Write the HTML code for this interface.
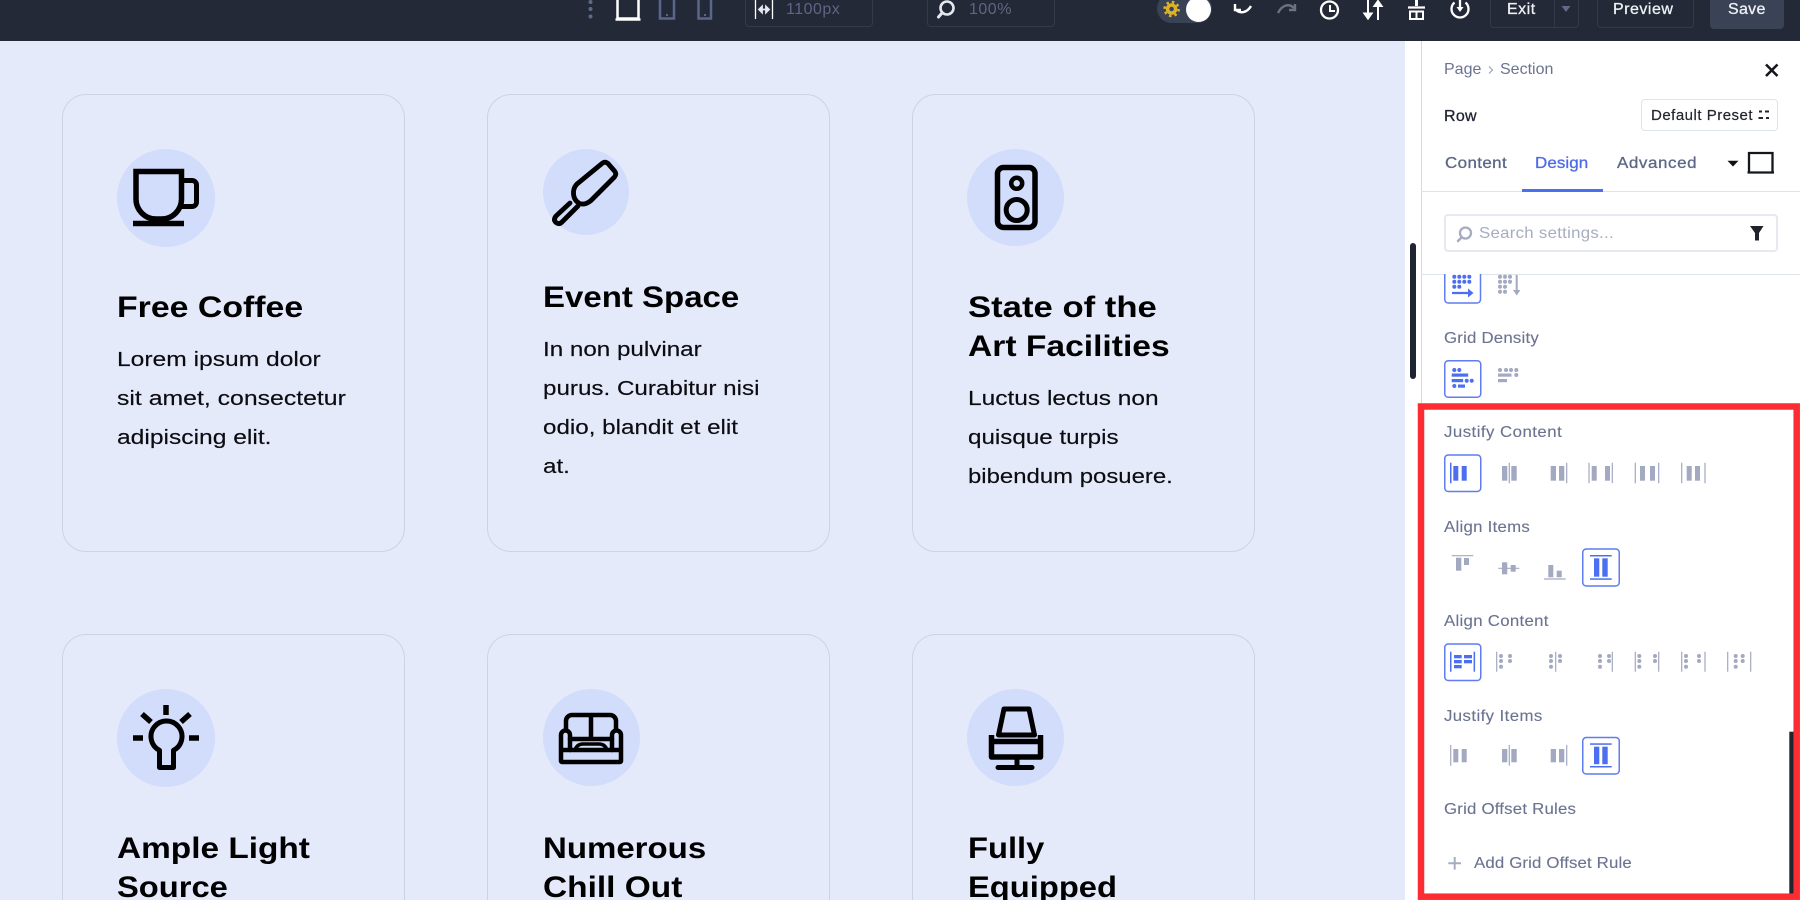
<!DOCTYPE html>
<html lang="en"><head><meta charset="utf-8"><title>Row Design Settings</title>
<style>
html,body{margin:0;padding:0;width:1800px;height:900px;overflow:hidden;background:#fff}
body{position:relative;font-family:"Liberation Sans",sans-serif}
.bg{position:absolute;left:0;top:41px;width:1405px;height:859px;background:#e5eafb}
.bar{position:absolute;left:0;top:0;width:1800px;height:41px;background:#232936}
.panel{position:absolute;left:1421px;top:41px;width:379px;height:859px;background:#fff;border-left:1px solid #d5d9e6;box-sizing:border-box}
.card{position:absolute;width:343px;box-sizing:border-box;border:1px solid #ccd3e4;border-radius:24px}
.r2{height:266px;border-bottom:0;border-radius:24px 24px 0 0}
.c{position:absolute;border-radius:50%;background:#d2dcfb}
.h{position:absolute;white-space:nowrap;font-size:30px;line-height:40px;font-weight:700;color:#000;transform:scaleX(1.1);transform-origin:0 0}
.b{position:absolute;white-space:nowrap;font-size:20.5px;line-height:39px;color:#0b0b10;-webkit-text-stroke:.15px #0b0b10;transform:scaleX(1.18);transform-origin:0 0}
.t{position:absolute;white-space:nowrap;font-size:16px;line-height:20px;color:#6b7390;transform:scaleX(1.05);transform-origin:0 0;-webkit-text-stroke:.12px #6b7390}
.p{position:absolute;white-space:nowrap;font-size:16px;line-height:20px;color:#6b7390}
.tab{position:absolute;white-space:nowrap;font-size:16px;line-height:20px;top:154px;transform:scaleX(1.06);transform-origin:0 0}
.box{position:absolute;box-sizing:border-box;border:1px solid #333a4a;border-radius:4px}
.w{color:#eef0f5;-webkit-text-stroke:.3px #eef0f5;letter-spacing:.5px}
svg.o{position:absolute;left:0;top:0;width:1800px;height:900px;pointer-events:none}
</style></head><body>
<div class="bg"></div>

<div class="card" style="left:62px;top:94px;height:458px"></div>
<div class="card" style="left:487px;top:94px;height:458px"></div>
<div class="card" style="left:912px;top:94px;height:458px"></div>
<div class="card r2" style="left:62px;top:634px"></div>
<div class="card r2" style="left:487px;top:634px"></div>
<div class="card r2" style="left:912px;top:634px"></div>

<div class="c" style="left:117px;top:149px;width:98px;height:98px"></div>
<div class="c" style="left:543px;top:149px;width:86px;height:86px"></div>
<div class="c" style="left:967px;top:149px;width:97px;height:97px"></div>
<div class="c" style="left:117px;top:689px;width:98px;height:98px"></div>
<div class="c" style="left:543px;top:689px;width:97px;height:97px"></div>
<div class="c" style="left:967px;top:689px;width:97px;height:97px"></div>

<div class="h" style="left:117px;top:288px;transform:scaleX(1.128)">Free Coffee</div>
<div class="b" style="left:117px;top:340px;transform:scaleX(1.2)">Lorem ipsum dolor</div>
<div class="b" style="left:117px;top:379px;transform:scaleX(1.21)">sit amet, consectetur</div>
<div class="b" style="left:117px;top:418px;transform:scaleX(1.2)">adipiscing elit.</div>

<div class="h" style="left:543px;top:277.5px">Event Space</div>
<div class="b" style="left:543px;top:330px">In non pulvinar</div>
<div class="b" style="left:543px;top:369px">purus. Curabitur nisi</div>
<div class="b" style="left:543px;top:408px">odio, blandit et elit</div>
<div class="b" style="left:543px;top:447px">at.</div>

<div class="h" style="left:968px;top:288px;transform:scaleX(1.156)">State of the</div>
<div class="h" style="left:968px;top:327px;transform:scaleX(1.12)">Art Facilities</div>
<div class="b" style="left:968px;top:379px;transform:scaleX(1.195)">Luctus lectus non</div>
<div class="b" style="left:968px;top:418px">quisque turpis</div>
<div class="b" style="left:968px;top:457px;transform:scaleX(1.167)">bibendum posuere.</div>

<div class="h" style="left:117px;top:829px;transform:scaleX(1.113)">Ample Light</div>
<div class="h" style="left:117px;top:868px;height:32px;overflow:hidden;transform:scaleX(1.09)">Source</div>
<div class="h" style="left:543px;top:829px">Numerous</div>
<div class="h" style="left:543px;top:868px;height:32px;overflow:hidden;transform:scaleX(1.115)">Chill Out</div>
<div class="h" style="left:968px;top:829px;transform:scaleX(1.09)">Fully</div>
<div class="h" style="left:968px;top:868px;height:32px;overflow:hidden;transform:scaleX(1.09)">Equipped</div>

<div class="panel"></div>
<div style="position:absolute;left:1410px;top:243px;width:5.5px;height:136px;border-radius:3px;background:#1e2430"></div>

<div class="bar"></div>
<div class="box" style="left:745px;top:-4px;width:128px;height:31px"></div>
<div class="box" style="left:927px;top:-4px;width:128px;height:31px"></div>
<div class="p" style="left:786px;top:0;color:#5d6785;letter-spacing:.5px">1100px</div>
<div class="p" style="left:969px;top:0;color:#5d6785;letter-spacing:.5px">100%</div>
<div style="position:absolute;left:1157px;top:-6px;width:55px;height:29px;border-radius:15px;background:#3a4356"></div>
<div style="position:absolute;left:1186px;top:-3px;width:25px;height:25px;border-radius:50%;background:#fff"></div>
<div class="box" style="left:1490px;top:-4px;width:89px;height:32px"></div>
<div class="box" style="left:1597px;top:-4px;width:97px;height:32px"></div>
<div style="position:absolute;left:1710px;top:-4px;width:74px;height:33px;border-radius:4px;background:#3a4355"></div>
<div style="position:absolute;left:1554px;top:0;width:1px;height:28px;background:#333a4a"></div>
<div class="p w" style="left:1507px;top:0">Exit</div>
<div class="p w" style="left:1613px;top:0">Preview</div>
<div class="p w" style="left:1728px;top:0;letter-spacing:.3px">Save</div>

<div class="p" style="left:1444px;top:60px">Page</div>
<div class="p" style="left:1500px;top:60px">Section</div>
<div class="p" style="left:1444px;top:107px;color:#1f2433;letter-spacing:.3px;-webkit-text-stroke:.3px #1f2433">Row</div>
<div style="position:absolute;left:1641px;top:99px;width:137px;height:32px;box-sizing:border-box;border:1px solid #dfe3ec;border-radius:4px"></div>
<div class="p" style="left:1651px;top:105.5px;color:#23262f;font-size:15px;letter-spacing:.5px;-webkit-text-stroke:.2px #23262f">Default Preset</div>
<div class="tab" style="left:1445px;color:#5d6785;letter-spacing:.36px;-webkit-text-stroke:.3px #5d6785">Content</div>
<div class="tab" style="left:1535px;color:#4f6ae8;letter-spacing:.08px;-webkit-text-stroke:.3px #4f6ae8">Design</div>
<div class="tab" style="left:1617px;color:#5d6785;letter-spacing:.56px;-webkit-text-stroke:.3px #5d6785">Advanced</div>
<div style="position:absolute;left:1421px;top:191px;width:379px;height:1px;background:#dfe3ea"></div>
<div style="position:absolute;left:1522px;top:188.5px;width:81px;height:3px;background:#4c6ef0"></div>
<div style="position:absolute;left:1444px;top:214px;width:334px;height:38px;box-sizing:border-box;border:2px solid #e6e9f0;border-radius:4px"></div>
<div class="t" style="left:1479px;top:223.5px;color:#a6adc0;letter-spacing:.27px;-webkit-text-stroke:0">Search settings...</div>
<div style="position:absolute;left:1421px;top:273.5px;width:379px;height:1px;background:#dfe3ea"></div>

<div class="t" style="left:1444px;top:329px;letter-spacing:.2px">Grid Density</div>
<div class="t" style="left:1444px;top:423px;letter-spacing:.45px">Justify Content</div>
<div class="t" style="left:1444px;top:518px;letter-spacing:.26px">Align Items</div>
<div class="t" style="left:1444px;top:612px;letter-spacing:.28px">Align Content</div>
<div class="t" style="left:1444px;top:706.5px;letter-spacing:.39px">Justify Items</div>
<div class="t" style="left:1444px;top:800px;letter-spacing:.2px">Grid Offset Rules</div>
<div class="t" style="left:1474px;top:854px;letter-spacing:.15px">Add Grid Offset Rule</div>

<svg class="o" viewBox="0 0 1800 900" xmlns="http://www.w3.org/2000/svg" fill="none">
<!-- card icons -->
<g stroke="#000" stroke-width="5.5" stroke-linejoin="round" stroke-linecap="round">
<path stroke-linejoin="miter" stroke-linecap="butt" d="M136 171.500H181.500V199a20 20 0 0 1-20 20H156a20 20 0 0 1-20-20Z"/>
<path stroke-width="5" stroke-linecap="butt" d="M182 180.500H192a4.500 4.500 0 0 1 4.500 4.500V202a4.500 4.500 0 0 1-4.500 4.500H178"/>
<path stroke-linecap="butt" d="M133 223.500H184"/>
<path stroke-width="4.800" d="M602 163.500Q605 161 608 163.500L614.500 171Q617 174 614.500 177L591 200.500Q585 205.500 579.500 203.500Q573 200 573.500 191.500Q574 187 577 184Z"/>
<path stroke-width="4.800" d="M570 203L556 216Q553 220 556 222.500Q559 225 562 222L578 206"/>
<rect x="997.500" y="167.500" width="37.500" height="60" rx="6" stroke-width="5.500"/>
<circle cx="1016.700" cy="183.300" r="5.500" stroke-width="4.500"/>
<circle cx="1016.700" cy="210" r="10.500" stroke-width="5"/>
<path stroke-width="5.500" stroke-linecap="butt" d="M166 705V715M142 714L151 722M190 714L181 722M133 738H143M189 738H199"/>
<path stroke-width="5" d="M159.500 750.300a15.500 15.500 0 1 1 14 0V767.500H159.500Z"/>
<path stroke-width="4.500" d="M566 730V721a6 6 0 0 1 6-6H610a6 6 0 0 1 6 6V730M591 715V739M570 739H612"/>
<path stroke-width="4.500" d="M561 750V735a4.500 4.500 0 0 1 9 0V750M612 750V735a4.500 4.500 0 0 1 9 0V750"/>
<path stroke-width="3.500" d="M575 750Q577 744 583 744H599Q605 744 607 750"/>
<rect x="561" y="750" width="60" height="12" rx="1" stroke-width="4.500"/>
<path stroke-width="5" d="M1004 709H1029L1034.500 735H998.500Z"/>
<path stroke-width="5.500" stroke-linecap="butt" d="M991.500 735V757H1040.500V735M991 741.500H1041"/>
<path stroke-width="5" d="M1017 757V767.500M998 767.500H1032"/>
</g>
<!-- top bar -->
<g fill="#5f6a8a"><circle cx="590.500" cy="2" r="2"/><circle cx="590.500" cy="9" r="2"/><circle cx="590.500" cy="16.500" r="2"/></g>
<path d="M617.500 -2V18.500H638.500V-2M615.500 19.500H640.500" stroke="#fff" stroke-width="2.500"/>
<path d="M660 -2V18.500H674V-2M698.500 -2V18.500H711V-2" stroke="#5a668c" stroke-width="2.500"/>
<rect x="666" y="14" width="2" height="2" fill="#5a668c"/><rect x="704" y="14" width="2" height="2" fill="#5a668c"/>
<path d="M755.500 0V19M772.500 0V19" stroke="#fff" stroke-width="1.300"/>
<path d="M759 9.500H769M759 9.500l3-3v6zM769 9.500l-3-3v6z" stroke="#e6e8ef" stroke-width="1.800" fill="#e6e8ef"/>
<circle cx="947" cy="8" r="6.500" stroke="#e6e8ef" stroke-width="2.600"/><path d="M942 13L938.500 17" stroke="#e6e8ef" stroke-width="3" stroke-linecap="round"/>
<circle cx="1171.600" cy="9" r="4" stroke="#dcb22a" stroke-width="3.500"/><circle cx="1171.600" cy="9" r="7" stroke="#dcb22a" stroke-width="2.500" stroke-dasharray="2.500 3"/>
<path d="M1235 4V10H1241M1235.500 9.500C1240 14 1247 13 1251 6" stroke="#fff" stroke-width="2.400"/>
<path d="M1295 4V10H1289M1294 8C1289 3 1282 5 1278 13" stroke="#6d7280" stroke-width="2.400"/>
<circle cx="1329.500" cy="10" r="8.500" stroke="#fff" stroke-width="2.300"/><path d="M1330 5V11H1335" stroke="#fff" stroke-width="2"/>
<path d="M1368 0V17M1378 20V2M1364.500 13.500L1368 18.500L1371.500 13.500ZM1374.500 6L1378 1L1381.500 6Z" stroke="#fff" stroke-width="2" fill="#fff"/>
<path d="M1408 7.500H1425" stroke="#fff" stroke-width="2.300"/><path d="M1416.500 0V6" stroke="#fff" stroke-width="3"/><path d="M1410 11.500H1423V19H1410ZM1416.500 11.500V19" stroke="#fff" stroke-width="2"/>
<path d="M1454.500 2.500A8.500 8.500 0 1 0 1465.500 2.500" stroke="#fff" stroke-width="2.300"/><path d="M1460 0V9" stroke="#fff" stroke-width="2.300"/><path d="M1456.500 7L1460 12L1463.500 7Z" fill="#fff"/>
<path d="M1561.500 6H1570.500L1566 12Z" fill="#5f6a8a"/>
<!-- panel head -->
<path d="M1489 66.500L1492.500 70L1489 73.500" stroke="#a6adc0" stroke-width="1.300"/>
<path d="M1766 64.500L1777.500 76M1777.500 64.500L1766 76" stroke="#15171e" stroke-width="2.600"/>
<path d="M1759 111.500H1762M1765 111.500H1769M1758.500 118H1763M1766 118H1769" stroke="#23262f" stroke-width="2"/>
<path d="M1727.500 160.700H1738.500L1733 166.500Z" fill="#111"/>
<path d="M1749 172V153H1772.500V172M1747.500 172.500H1774" stroke="#15171e" stroke-width="2.300"/>
<circle cx="1465.500" cy="233" r="5.500" stroke="#a6adc0" stroke-width="2.300"/><path d="M1461.500 237.500L1458 241" stroke="#a6adc0" stroke-width="2.500" stroke-linecap="round"/>
<path d="M1750 226H1763.500L1759 233V240.500H1755V233Z" fill="#20232c"/>

<!-- active buttons -->
<g stroke="#5f7cf0" stroke-width="1.500" fill="#fff">
<path d="M1444.750 274V299.500a3.500 3.500 0 0 0 3.500 3.500H1477a3.500 3.500 0 0 0 3.500-3.500V274"/>
<rect x="1444.750" y="360.750" width="36" height="36.500" rx="3.500"/>
<rect x="1444.750" y="455" width="36" height="36.500" rx="3.500"/>
<rect x="1582.750" y="549" width="36.500" height="37" rx="3.500"/>
<rect x="1444.750" y="644" width="36" height="36.500" rx="3.500"/>
<rect x="1582.750" y="737.500" width="36.500" height="36.500" rx="3.500"/>
</g>

<!-- blue glyphs -->
<g fill="#4c6ef0">
<path d="M1452 293H1470" stroke="#4c6ef0" stroke-width="2.200"/><path d="M1468 288.500L1473.500 293L1468 297.500Z"/>
<rect x="1451.700" y="373.500" width="16.500" height="3.200"/>
<rect x="1451.700" y="379" width="11.500" height="3.200"/>
<rect x="1458" y="384.500" width="7" height="3.200"/>
<rect x="1450" y="462.700" width="1.500" height="20.600"/>
<rect x="1453.300" y="466" width="5" height="14.700"/>
<rect x="1461.700" y="466" width="5" height="14.700"/>
<rect x="1590" y="555" width="21.700" height="1.500"/>
<rect x="1590" y="578.300" width="21.700" height="1.500"/>
<rect x="1594" y="558.300" width="5.300" height="18.400"/>
<rect x="1602.300" y="558.300" width="5.400" height="18.400"/>
<rect x="1450" y="651.700" width="1.500" height="20"/>
<rect x="1473.600" y="651.700" width="1.500" height="20"/>
<rect x="1454" y="655" width="7.700" height="3.300"/>
<rect x="1464" y="655" width="8" height="3.300"/>
<rect x="1454" y="660" width="7.700" height="3.300"/>
<rect x="1464" y="660" width="8" height="3.300"/>
<rect x="1454" y="665" width="7.700" height="3.300"/>
<rect x="1590" y="743.300" width="21.700" height="1.500"/>
<rect x="1590" y="766" width="21.700" height="1.500"/>
<rect x="1594" y="746.700" width="5.300" height="17.500"/>
<rect x="1602.300" y="746.700" width="5.400" height="17.500"/>
</g>
<path d="M1454.300 276.700h.01M1459.300 276.700h.01M1464.300 276.700h.01M1469.300 276.700h.01M1454.300 281.700h.01M1459.300 281.700h.01M1464.300 281.700h.01M1469.300 281.700h.01M1454.300 286.700h.01M1459.300 286.700h.01M1454.300 370h.01M1459.300 370h.01M1466.700 380.700h.01M1471.700 380.700h.01M1454.300 386h.01" stroke="#4c6ef0" stroke-width="4" stroke-linecap="round"/>

<!-- gray glyphs -->
<path stroke="#a3a9c0" stroke-width="4" stroke-linecap="round" d="M1500 276.700h.01M1505 276.700h.01M1510 276.700h.01M1500 281.700h.01M1505 281.700h.01M1510 281.700h.01M1500 286.700h.01M1505 286.700h.01M1500 291.700h.01M1505 291.700h.01
M1500 370h.01M1506 370h.01M1511 370h.01M1516.300 370h.01M1516.300 375h.01
M1501 656h.01M1510 656h.01M1501 661h.01M1510 661h.01M1501 666.700h.01
M1551 656h.01M1560 656h.01M1551 661h.01M1560 661h.01M1551 666.700h.01
M1600 656h.01M1609 656h.01M1600 661h.01M1609 661h.01M1600 666.700h.01
M1639.300 656h.01M1655 656h.01M1639.300 661h.01M1655 661h.01M1639.300 666.700h.01
M1686 656h.01M1699 656h.01M1686 661h.01M1699 661h.01M1686 666.700h.01
M1735.700 656h.01M1742.700 656h.01M1735.700 661h.01M1742.700 661h.01M1735.700 666.700h.01"/>
<path stroke="#a3a9c0" stroke-width="2" d="M1516.700 275V291"/>
<g fill="#a3a9c0">
<path d="M1513 290L1516.700 295.500L1520.400 290Z"/>
<rect x="1498" y="373.500" width="13.500" height="3.200"/>
<rect x="1498" y="379" width="9" height="3.200"/>
</g>
<g fill="#a3a9c0">
<!-- justify content -->
<rect x="1502" y="466" width="5.300" height="14.700"/><rect x="1511.300" y="466" width="5.400" height="14.700"/>
<rect x="1550.700" y="466" width="5.300" height="14.700"/><rect x="1559" y="466" width="5.300" height="14.700"/>
<rect x="1591.700" y="466" width="5" height="14.700"/><rect x="1605" y="466" width="5" height="14.700"/>
<rect x="1640" y="466" width="5" height="14.700"/><rect x="1650" y="466" width="5" height="14.700"/>
<rect x="1686.700" y="466" width="5" height="14.700"/><rect x="1695" y="466" width="5" height="14.700"/>
<!-- align items -->
<rect x="1456" y="557.700" width="5.300" height="13"/><rect x="1464" y="558" width="5" height="7"/>
<rect x="1502" y="562.300" width="5.300" height="12"/><rect x="1510.700" y="565" width="5" height="6.700"/>
<rect x="1548.300" y="565" width="5" height="12.300"/><rect x="1556.700" y="570.700" width="5" height="6.600"/>
<!-- justify items -->
<rect x="1453.300" y="749" width="5" height="13.300"/><rect x="1461.700" y="749" width="5" height="13.300"/>
<rect x="1502" y="749" width="5.300" height="13.300"/><rect x="1511.300" y="749" width="5.400" height="13.300"/>
<rect x="1550.700" y="749" width="5.300" height="13.300"/><rect x="1559" y="749" width="5.300" height="13.300"/>
</g>
<path stroke="#a3a9c0" stroke-width="1.200" d="M1509.300 462.700V483.300M1566.700 462.700V483.300M1589 462.700V483.300M1612.300 462.700V483.300M1635.300 462.700V483.300M1658.700 462.700V483.300M1681.700 462.700V483.300M1705 462.700V483.300
M1451.700 555.700H1473.300M1498.300 568.300H1519.300M1544 579H1565.700
M1496.700 651.700V671.700M1555.700 651.700V671.700M1612.300 651.700V671.700M1635.300 651.700V671.700M1658.700 651.700V671.700M1681.700 651.700V671.700M1705 651.700V671.700M1727.700 651.700V671.700M1750.700 651.700V671.700
M1450.700 745V765.700M1509.300 745V765.700M1566.700 745V765.700"/>
<path d="M1448.300 863.300H1461M1454.700 857V869.600" stroke="#a6adc0" stroke-width="2"/>

<!-- scrollbar + red outline -->
<rect x="1789.300" y="731.700" width="4.200" height="162" fill="#1f2630"/>
<rect x="1421" y="406.500" width="375.700" height="490.200" stroke="#fb2d33" stroke-width="6.500"/>
</svg>
</body></html>
